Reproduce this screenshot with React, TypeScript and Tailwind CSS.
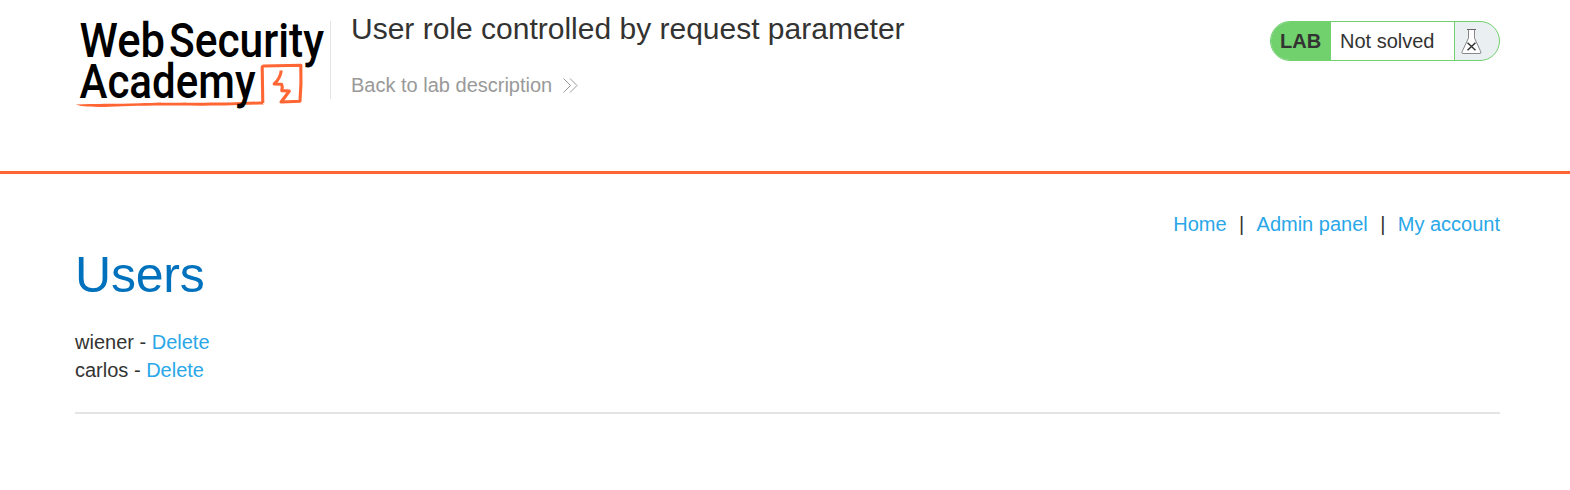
import React from "react";

function Logo() {
  return (
    <svg
      width="254"
      height="110"
      viewBox="75 5 254 110"
      className="block shrink-0 overflow-visible"
      fontFamily="Roboto, sans-serif"
      fontWeight="500"
    >
      <path
        d="M76 104.6 C95 103.4 115 104.2 140 103.2 C165 102.2 205 103 235 102.2 L262 101.4 L263.6 104.4 C245 104.8 225 105.8 200 105.7 C160 105.2 130 106 110 106.7 C95 107.2 80 106.9 76 104.6 Z"
        fill="#ff6633"
      />
      <path
        d="M262.8 103 L262.2 68 Q262 66.2 264 66 L300.8 65.3 Q301.5 84 300 101.2 L281 102 Q285.5 96.5 289.3 91 L281.8 90.6 Q283 87 281.6 84.2 L274.2 84 Q280.6 78 281.2 70.5"
        fill="none"
        stroke="#ff6633"
        strokeWidth="3.1"
        strokeLinejoin="round"
      />
      <g fill="#000">
        <text x="79.5" y="57" fontSize="48" textLength="85.5" lengthAdjust="spacingAndGlyphs">Web</text>
        <text x="169" y="57" fontSize="48" textLength="155" lengthAdjust="spacingAndGlyphs">Security</text>
        <text x="79.5" y="97.7" fontSize="47.5" textLength="176" lengthAdjust="spacingAndGlyphs">Academy</text>
      </g>
    </svg>
  );
}

function Flask() {
  return (
    <svg width="21" height="27" viewBox="0 0 21 27" className="block">
      <path d="M7.5 1.5 V10 L1 23.8 Q.6 25.5 2 25.5 H19 Q20.2 25.5 19.8 23.8 L13.5 10 V1.5 Z" fill="#fff" stroke="#888" strokeWidth="1" />
      <path d="M6 1.5 H15" stroke="#666" strokeWidth="1.2" />
      <path d="M6.5 14.8 L14.5 22.3 M14.5 14.8 L6.5 22.3" stroke="#333" strokeWidth="1.5" />
    </svg>
  );
}

const users = ["wiener", "carlos"];

export default function App() {
  return (
    <div className="h-[490px] overflow-hidden bg-white font-['Liberation_Sans',Arial,sans-serif] text-[20px] leading-[28px] text-[#333332]">
      <header className="flex h-[174px] items-start border-b-3 border-[#ff6633] pt-[5px] pr-[70px] pl-[75px]">
        <Logo />
        <div className="mt-[16px] ml-px h-[78px] border-l border-[#e4e4e4]" />
        <div className="ml-[20px] flex flex-col">
          <h2 className="mt-[4px] text-[30px] leading-[40px] whitespace-nowrap">
            User role controlled by request parameter
          </h2>
          <a className="mt-[22px] flex items-center text-[#999999]">
            Back to lab description
            <svg width="15" height="15" viewBox="0 0 15 15" className="ml-[11px]" fill="none" stroke="#999" strokeWidth="1">
              <path d="M.5 .5 L7.5 7.5 L.5 14.5 M7 .5 L14 7.5 L7 14.5" />
            </svg>
          </a>
        </div>
        <div className="mt-[16px] ml-auto flex h-[40px] w-[230px] overflow-hidden rounded-full border border-[#70d16d] bg-[#eaeff2]">
          <span className="flex w-[60px] items-center bg-[#70d16d] pl-[9px] font-bold">LAB</span>
          <span className="flex w-[124px] items-center border-r border-[#70d16d] bg-white pl-[9px]">Not solved</span>
          <span className="flex items-center pl-[6px]"><Flask /></span>
        </div>
      </header>
      <main className="flex flex-col pr-[70px] pl-[75px]">
        <nav className="mt-[36px] flex justify-end">
          <a className="text-[#29a7e8]">Home</a>
          <span className="w-[30px] text-center">|</span>
          <a className="text-[#29a7e8]">Admin panel</a>
          <span className="w-[30px] text-center">|</span>
          <a className="text-[#29a7e8]">My account</a>
        </nav>
        <h1 className="mt-[7px] text-[50px] leading-[60px] tracking-[-0.2px] text-[#0071bd]">Users</h1>
        <div className="mt-[23px]">
          {users.map((user) => (
            <div key={user}>
              {user} - <a className="text-[#29a7e8]">Delete</a>
            </div>
          ))}
        </div>
        <hr className="mt-[28px] border-t-2 border-[#e4e4e4]" />
      </main>
    </div>
  );
}
